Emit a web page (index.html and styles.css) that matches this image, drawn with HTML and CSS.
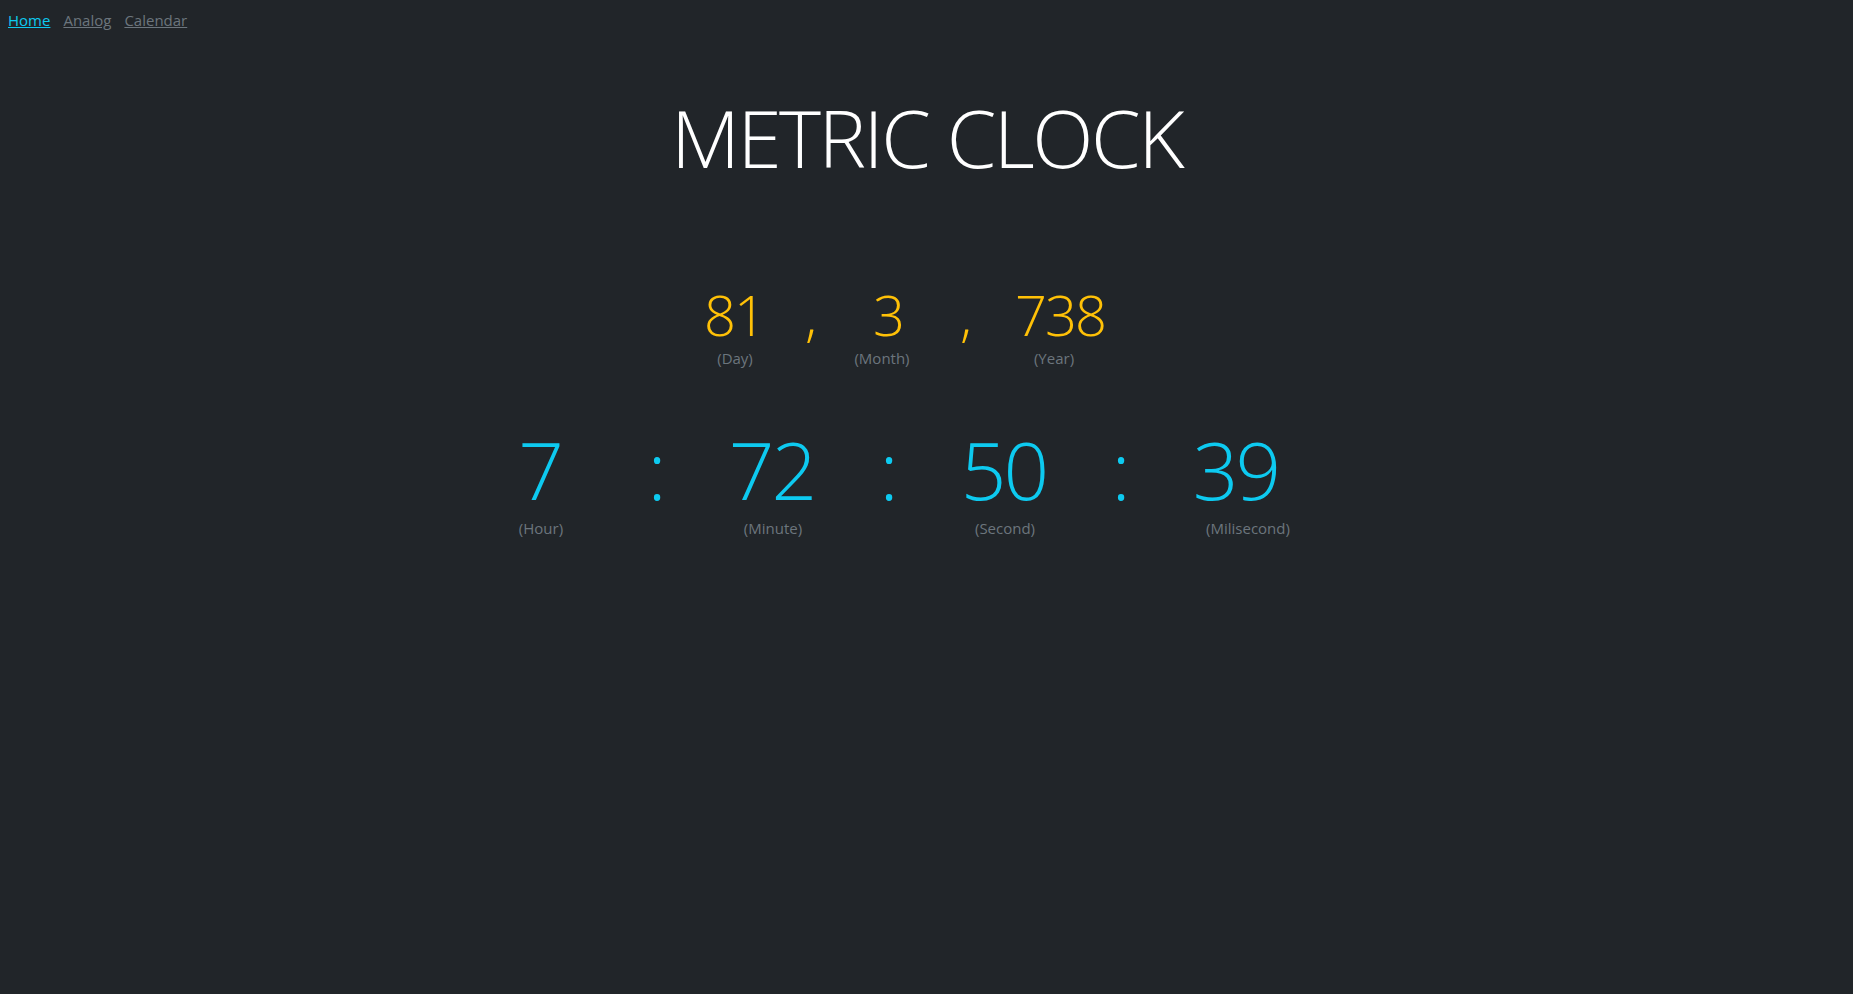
FILE: index.html
```html
<!DOCTYPE html>
<html lang="en">
<head>
<meta charset="utf-8">
<title>Metric Clock</title>
<link rel="stylesheet" href="styles.css">
</head>
<body>
<nav class="nav">
  <a href="#" class="nav-link active">Home</a>
  <a href="#" class="nav-link">Analog</a>
  <a href="#" class="nav-link">Calendar</a>
</nav>
<h1 class="title">METRIC CLOCK</h1>

<section class="date-row">
  <div class="cell day">
    <div class="num date-num">81</div>
    <div class="label">(Day)</div>
  </div>
  <div class="cell sep">
    <div class="num date-num">,</div>
  </div>
  <div class="cell month">
    <div class="num date-num shift-r">3</div>
    <div class="label shift-l">(Month)</div>
  </div>
  <div class="cell sep">
    <div class="num date-num">,</div>
  </div>
  <div class="cell year">
    <div class="num date-num shift-r">738</div>
    <div class="label shift-l">(Year)</div>
  </div>
</section>

<section class="time-row">
  <div class="cell">
    <div class="num time-num">7</div>
    <div class="label">(Hour)</div>
  </div>
  <div class="cell"><div class="num time-num">:</div></div>
  <div class="cell">
    <div class="num time-num">72</div>
    <div class="label">(Minute)</div>
  </div>
  <div class="cell"><div class="num time-num">:</div></div>
  <div class="cell">
    <div class="num time-num">50</div>
    <div class="label">(Second)</div>
  </div>
  <div class="cell"><div class="num time-num">:</div></div>
  <div class="cell">
    <div class="num time-num">39</div>
    <div class="label ms-label">(Milisecond)</div>
  </div>
</section>
</body>
</html>
```
FILE: styles.css
```css
html, body {
  margin: 0;
  padding: 0;
  background: #212529;
}
body {
  font-family: "Open Sans", "Noto Sans", "DejaVu Sans", sans-serif;
  font-size: 16px;
  line-height: 1.5;
  color: #dee2e6;
  height: 994px;
}
.nav {
  display: flex;
  gap: 13px;
  padding: 9px 8px 0;
  font-size: 15px;
  line-height: 22px;
}
.nav-link {
  color: #6c757d;
  text-decoration: underline;
}
.nav-link.active {
  color: #0dcaf0;
}
.title {
  margin: 58px 0 0;
  text-align: center;
  font-size: 80px;
  font-weight: 300;
  line-height: 96px;
  letter-spacing: -2.5px;
  color: #ffffff;
}
.date-row {
  display: grid;
  grid-template-columns: 120px 32px 118px 42px 142px;
  margin-top: 100px;
  margin-left: 675px;
}
.time-row {
  display: grid;
  grid-template-columns: repeat(7, 116px);
  margin-top: 54px;
  margin-left: 483px;
}
.cell {
  display: flex;
  flex-direction: column;
  align-items: center;
}
.num {
  font-weight: 300;
}
.date-num {
  font-size: 56px;
  color: #ffc107;
  line-height: 58px;
  letter-spacing: -2px;
  padding-right: 2px;
}
.time-num {
  font-size: 80px;
  color: #0dcaf0;
  line-height: 90px;
  letter-spacing: -3px;
  padding-right: 3px;
}
.label {
  color: #6c757d;
  font-size: 15px;
  line-height: 22.5px;
}
.date-row .label {
  margin-top: 4px;
}
.time-row .label {
  margin-top: 3px;
}
.shift-r { padding-left: 6px; }
.shift-l { padding-right: 8px; }
.ms-label { padding-left: 22px; }
```
